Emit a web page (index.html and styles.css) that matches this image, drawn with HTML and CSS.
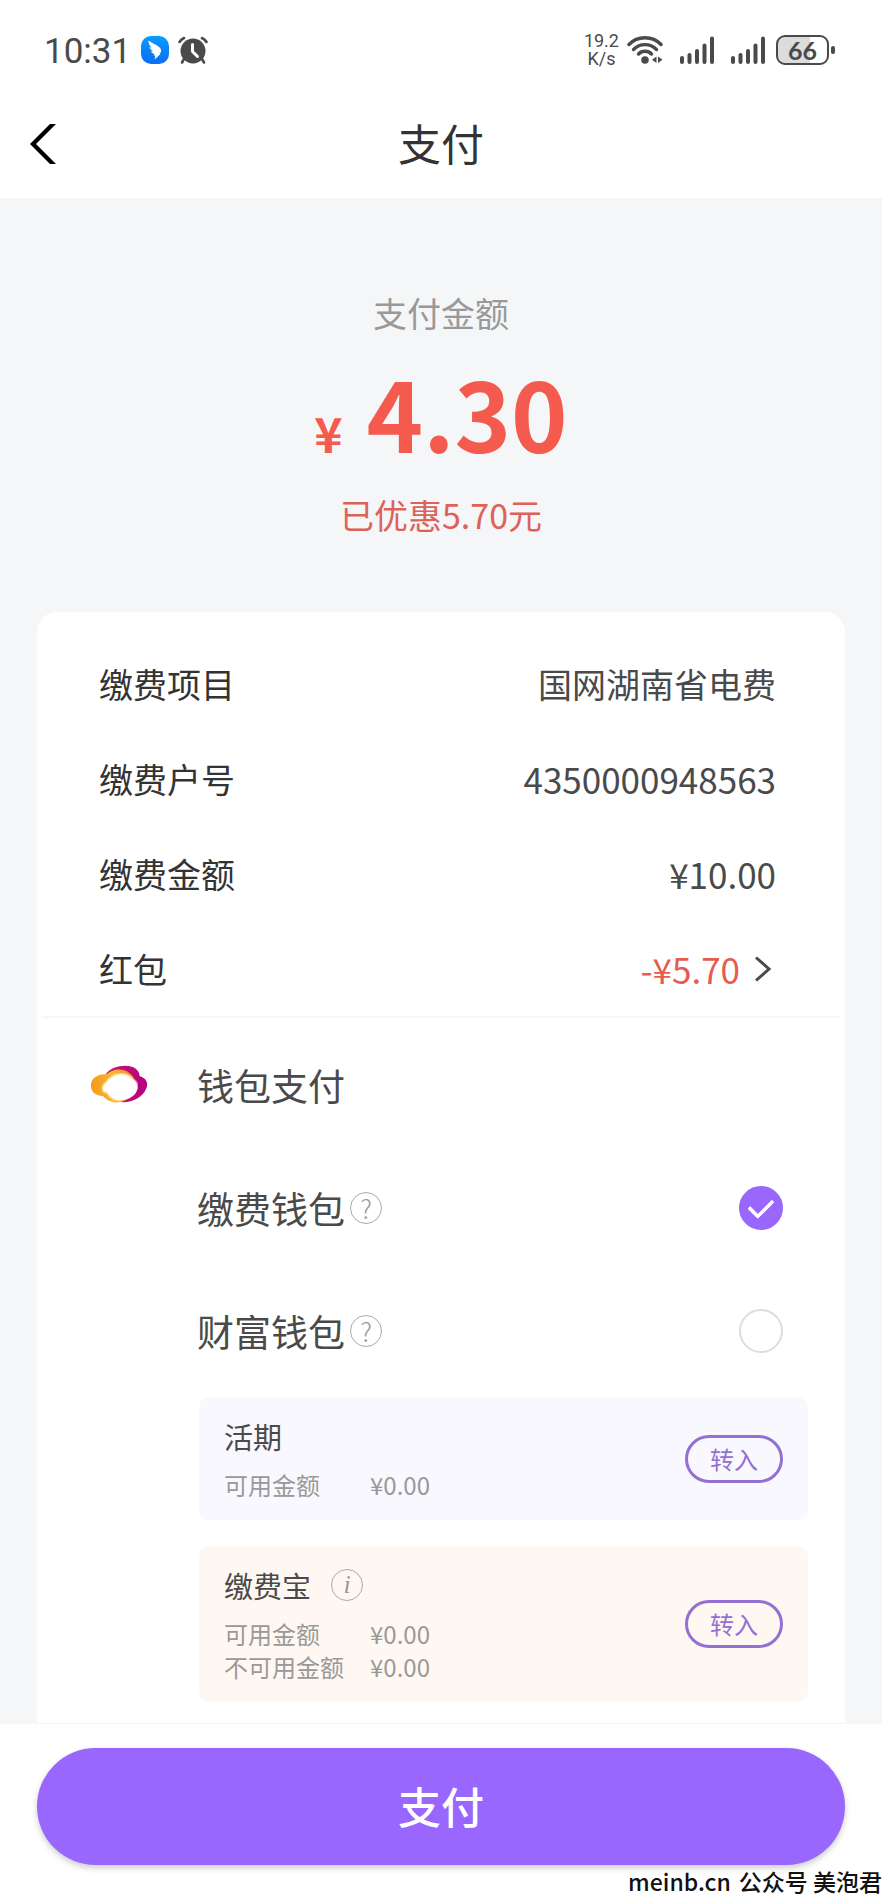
FILE: index.html
```html
<!DOCTYPE html>
<html lang="zh-CN">
<head>
<meta charset="utf-8">
<meta name="viewport" content="width=device-width, initial-scale=1">
<title>支付</title>
<link rel="stylesheet" href="styles.css">
</head>
<body>
<div class="page">
  <header class="top">
    <div class="status">
      <span class="clock">10:31</span>
      <svg class="app-icon" viewBox="0 0 28 28" width="28" height="28" aria-hidden="true">
        <defs><linearGradient id="appBlue" x1="0" y1="0" x2="0" y2="1"><stop offset="0" stop-color="#0a9cff"/><stop offset="1" stop-color="#0a6cf2"/></linearGradient></defs>
        <rect width="28" height="28" rx="10" fill="url(#appBlue)"/>
        <path d="M7.500 4.500C11 7.500 17 9 19.500 12.500C20.800 14.500 20 16.500 18.500 18H19.500L13.500 23.500L14.500 19.500H12.500L13.500 18C11.500 17.500 10.500 16.500 10 15.500L12 15.300C10 14 8.800 12.500 8.500 11L10.800 11.500C8.500 9.500 7.300 7.500 7.500 4.500Z" fill="#fff"/>
      </svg>
      <svg class="alarm-icon" viewBox="0 0 30 28" width="30" height="28" aria-hidden="true">
        <circle cx="15" cy="15" r="12.500" fill="#4a4a4a"/>
        <g fill="none" stroke="#4a4a4a" stroke-linecap="round">
          <path d="M1.500 6Q3 3.500 6 2M28.500 6Q27 3.500 24 2" stroke-width="2.600"/>
          <path d="M6 23L4 26.500M24 23L26 26.500" stroke-width="2.600"/>
        </g>
        <path d="M14.500 8.500V15.500L19.500 20.500" fill="none" stroke="#fff" stroke-width="3" stroke-linecap="round" stroke-linejoin="round"/>
      </svg>
      <div class="status-right">
        <span class="speed">19.2<br>K/s</span>
        <svg viewBox="0 0 36 28" width="36" height="28" aria-hidden="true">
          <g fill="none" stroke="#4a4a4a" stroke-width="3.400" stroke-linecap="round">
            <path d="M2 8.500C10.500-.5 25.500-.5 34 8.500"/>
            <path d="M6.500 13.500C13 7 23 7 29.500 13.500"/>
            <path d="M11.500 18C15 14.300 21 14.300 24.500 18"/>
          </g>
          <circle cx="18" cy="24" r="3.800" fill="#4a4a4a"/>
          <path d="M29.500 20.500V27L25 23.800ZM31 20.500V27L35.500 23.800Z" fill="#4a4a4a"/>
        </svg>
        <svg class="signal" viewBox="0 0 34 28" width="34" height="28" aria-hidden="true">
          <path d="M2 22V26M9.500 19V26M17 15V26M24.500 9.500V26M32 2.500V26" fill="none" stroke="#4a4a4a" stroke-width="4" stroke-linecap="round"/>
        </svg>
        <svg class="signal" viewBox="0 0 34 28" width="34" height="28" aria-hidden="true">
          <path d="M2 22V26M9.500 19V26M17 15V26M24.500 9.500V26M32 2.500V26" fill="none" stroke="#4a4a4a" stroke-width="4" stroke-linecap="round"/>
        </svg>
        <span class="battery"><span class="battery-body">66</span></span>
      </div>
    </div>
    <div class="nav">
      <button class="back" type="button" aria-label="返回">
        <svg viewBox="0 0 27 42" width="27" height="42" aria-hidden="true"><path d="M20 1H26L6 21L26 41H20L0 21Z" fill="#000"/></svg>
      </button>
      <h1 class="title">支付</h1>
    </div>
  </header>

  <main class="content">
    <section class="summary">
      <p class="summary-label">支付金额</p>
      <p class="amount"><span class="currency">¥</span><span class="value">4.30</span></p>
      <p class="discount">已优惠5.70元</p>
    </section>

    <section class="card">
      <dl class="details">
        <div class="detail"><dt>缴费项目</dt><dd>国网湖南省电费</dd></div>
        <div class="detail"><dt>缴费户号</dt><dd class="number">4350000948563</dd></div>
        <div class="detail"><dt>缴费金额</dt><dd class="number">¥10.00</dd></div>
        <div class="detail"><dt>红包</dt><dd class="number">
          <button class="coupon" type="button">-¥5.70
            <svg viewBox="0 0 18 26" width="18" height="26" aria-hidden="true"><path d="M2 1.500L15 13L2 24.500" fill="none" stroke="#4a4a4a" stroke-width="3"/></svg>
          </button></dd></div>
      </dl>

      <div class="methods">
        <div class="method">
          <svg class="logo" viewBox="0 0 58 40" width="58" height="40" aria-hidden="true">
            <defs>
              <linearGradient id="ringWarm" x1="0" y1="0" x2="1" y2="0"><stop offset="0" stop-color="#f59a1c"/><stop offset=".5" stop-color="#fab53a"/><stop offset="1" stop-color="#ec6a48"/></linearGradient>
              <linearGradient id="ringPink" x1="0" y1="0" x2="1" y2="0"><stop offset="0" stop-color="#c8186f"/><stop offset="1" stop-color="#b4007f"/></linearGradient>
            </defs>
            <path d="M16 9C22 0 41-2 47 5C49 7 49.500 9 49.500 11C56 13 59 18 56 24C52 34 36 41 22 35C38 37 47 30 48 21C48 17 46 15 44 14Z" fill="url(#ringPink)"/>
            <path d="M17 9C25 2 39 3 44.500 14C51 18 48 30 38 34C29 40 19 38 13 31C5 31 0 26 1 19C2 12 9 9 17 9Z" fill="url(#ringWarm)"/>
            <path d="M45 15C51 20 48 30 36 35Z" fill="#dd8bd3"/>
            <path d="M16 17C22 7 38 6 43 14C50 19 48 29 41 32C31 38 20 36 17 28C11 27 11 21 16 17Z" fill="#fff"/>
            <path d="M43 14C37 6 23 7 16 17C11 21 11 27 17 28C20 34 25 36 31 36" fill="none" stroke="#ffdc82" stroke-width="1.500"/>
          </svg>
          <h2 class="method-name">钱包支付</h2>
        </div>
        <div class="method">
          <label class="method-name" for="pay-wallet">缴费钱包</label>
          <button class="hint" type="button" aria-label="缴费钱包说明">?</button>
          <input class="choice" type="radio" name="wallet" id="pay-wallet" checked>
        </div>
        <div class="method">
          <label class="method-name" for="wealth-wallet">财富钱包</label>
          <button class="hint" type="button" aria-label="财富钱包说明">?</button>
          <input class="choice" type="radio" name="wallet" id="wealth-wallet">
        </div>
      </div>

      <div class="accounts">
        <article class="account account-current">
          <div class="account-info">
            <h3 class="account-name">活期</h3>
            <dl class="balances"><dt>可用金额</dt><dd>¥0.00</dd></dl>
          </div>
          <button class="transfer" type="button">转入</button>
        </article>
        <article class="account account-bao">
          <div class="account-info">
            <h3 class="account-name">缴费宝 <button class="hint hint-info" type="button" aria-label="缴费宝说明">i</button></h3>
            <dl class="balances"><dt>可用金额</dt><dd>¥0.00</dd><dt>不可用金额</dt><dd>¥0.00</dd></dl>
          </div>
          <button class="transfer" type="button">转入</button>
        </article>
      </div>
    </section>
  </main>

  <footer class="bottom">
    <button class="pay" type="button">支付</button>
    <p class="credit"><span>meinb.cn</span><span>公众号 美泡君</span></p>
  </footer>
</div>
</body>
</html>
```
FILE: styles.css
```css
* { box-sizing: border-box; }

body, h1, h2, h3, p, dl, dd { margin: 0; }

body {
  background: #fff;
  color: #4a4a4a;
  font-family: "Noto Sans CJK SC", sans-serif;
  font-size: 34px;
}

button {
  padding: 0;
  border: 0;
  background: none;
  color: inherit;
  font: inherit;
  cursor: pointer;
}

svg { display: block; flex: none; }

.page {
  display: flex;
  flex-direction: column;
  min-height: 100vh;
}

/* Status bar and title */
.status {
  display: flex;
  align-items: center;
  height: 90px;
  padding: 10px 47px 0 44px;
}
.clock {
  padding-top: 3px;
  font-family: Roboto, sans-serif;
  font-size: 35px;
  line-height: 40px;
}
.app-icon { margin-left: 10px; }
.alarm-icon { margin-left: 9px; }
.status-right {
  display: flex;
  align-items: center;
  margin-left: auto;
}
.speed {
  margin-right: 8px;
  font-family: Roboto, sans-serif;
  font-size: 18px;
  line-height: 18px;
  text-align: center;
}
.signal { margin-left: 17px; }
.battery {
  display: flex;
  align-items: center;
  gap: 2px;
  margin-left: 11px;
}
.battery::after {
  content: "";
  width: 4px;
  height: 8px;
  border-radius: 2px;
  background: #4a4a4a;
}
.battery-body {
  width: 53px;
  height: 30px;
  border: 2px solid #4a4a4a;
  border-radius: 9px;
  background: linear-gradient(to right, #dcdcdc 66%, #fff 66%);
  font-family: Lato, sans-serif;
  font-size: 25px;
  font-weight: 700;
  line-height: 26px;
  text-align: center;
}
.nav {
  display: grid;
  grid-template-columns: 60px 1fr 60px;
  align-items: center;
  height: 108px;
}
.back { padding-left: 30px; }
.title {
  grid-column: 2;
  padding-bottom: 4px;
  color: #333;
  font-size: 43px;
  font-weight: 400;
  line-height: 56px;
  text-align: center;
}

/* Amount */
.content {
  flex: 1;
  padding: 0 37px;
  background: #f5f6f8;
}
.summary {
  padding: 91px 0 73px;
  text-align: center;
}
.summary-label { color: #999; line-height: 48px; }
.amount {
  display: flex;
  justify-content: center;
  align-items: baseline;
  gap: 24px;
  height: 100px;
  margin-top: 25px;
  color: #f55a4e;
  font-weight: 700;
}
.currency { font-size: 48px; line-height: 48px; }
.value { font-size: 96px; line-height: 100px; }
.discount { margin-top: 29px; color: #dd6259; line-height: 48px; }

/* Bill details */
.card {
  padding-bottom: 21px;
  border-radius: 20px 20px 0 0;
  background: #fff;
}
.details {
  margin: 0 5px;
  padding: 24px 64px 0 57px;
  border-bottom: 2px solid #f7f7f7;
}
.detail {
  display: flex;
  justify-content: space-between;
  align-items: center;
  height: 95px;
}
.detail dt { color: #333; }
.number { font-size: 35px; }
.coupon {
  display: flex;
  align-items: center;
  gap: 14px;
  padding-right: 4px;
  color: #e65c50;
}

/* Wallets */
.methods { padding: 5px 62px 0 160px; }
.method {
  display: flex;
  align-items: center;
  height: 123px;
}
.logo { margin: 0 49px 0 -107px; }
.method-name {
  font-size: 37px;
  font-weight: 400;
  line-height: 50px;
}
.hint {
  flex: none;
  width: 32px;
  height: 32px;
  margin-left: 5px;
  border: 1px solid #aaa;
  border-radius: 50%;
  color: #999;
  font-size: 26px;
  font-weight: 300;
  line-height: 28px;
  text-align: center;
}
.choice {
  appearance: none;
  display: grid;
  place-items: center;
  width: 44px;
  height: 44px;
  margin: 0 0 0 auto;
  border: 2px solid #ddd;
  border-radius: 50%;
}
.choice:checked { border-color: #9966fe; background: #9966fe; }
.choice:checked::before {
  content: "";
  width: 20px;
  height: 11px;
  margin-bottom: 4px;
  border: solid #fff;
  border-width: 0 0 4px 4px;
  border-radius: 2px;
  transform: rotate(-45deg);
}

/* Accounts */
.accounts {
  display: grid;
  gap: 26px;
  padding: 5px 37px 0 162px;
}
.account {
  display: flex;
  justify-content: space-between;
  align-items: center;
  padding: 19px 25px;
  border-radius: 10px;
}
.account-current { background: #faf8ff; }
.account-bao { background: #fff8f2; }
.account-name {
  display: flex;
  align-items: center;
  font-size: 29px;
  font-weight: 400;
  line-height: 40px;
}
.hint-info {
  margin-left: 20px;
  font-family: "Liberation Serif", serif;
  font-style: italic;
}
.balances {
  display: grid;
  grid-template-columns: 146px auto;
  margin-top: 12px;
  color: #999;
  font-size: 24px;
  line-height: 33px;
}
.transfer {
  width: 98px;
  height: 48px;
  border: 3px solid #9370d2;
  border-radius: 24px;
  color: #9370d2;
  font-size: 24px;
  line-height: 40px;
}

/* Pay bar */
.bottom { padding: 24px 0 6px; }
.pay {
  display: block;
  width: calc(100% - 74px);
  height: 117px;
  margin: 0 37px;
  padding-bottom: 4px;
  border-radius: 59px;
  background: #9966fe;
  box-shadow: 0 3px 6px rgba(0, 0, 0, .2);
  color: #fff;
  font-size: 43px;
  font-weight: 500;
}
.credit {
  display: flex;
  justify-content: flex-end;
  gap: 8px;
  color: #111;
  font-size: 23px;
  font-weight: 500;
  line-height: 32px;
}
```
